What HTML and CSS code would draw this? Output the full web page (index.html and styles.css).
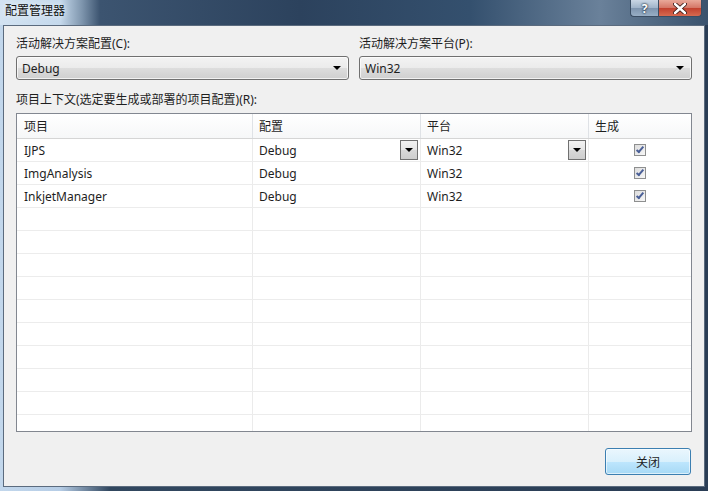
FILE: index.html
```html
<!DOCTYPE html>
<html lang="zh-CN">
<head>
    <meta charset="UTF-8">
    <title>配置管理器</title>
    <link rel="stylesheet" href="styles.css">
</head>
<body>
    <div class="window">
        <div class="titlebar">
            <span class="title">配置管理器</span>
            <div class="caption-buttons">
                <div class="cap-btn help">?</div>
                <div class="cap-btn close">
                    <svg width="14" height="11" viewBox="0 0 14 11">
                        <path d="M2 1 L12 10 M12 1 L2 10" stroke="#3a1a16" stroke-width="4.2" stroke-linecap="round"/>
                        <path d="M2 1 L12 10 M12 1 L2 10" stroke="#ffffff" stroke-width="2.4" stroke-linecap="round"/>
                    </svg>
                </div>
            </div>
        </div>

        <div class="client">
            <div class="top-row">
                <div class="field">
                    <div class="label">活动解决方案配置(C):</div>
                    <div class="combo">
                        <span>Debug</span>
                        <span class="arrow"></span>
                    </div>
                </div>
                <div class="field">
                    <div class="label">活动解决方案平台(P):</div>
                    <div class="combo">
                        <span>Win32</span>
                        <span class="arrow"></span>
                    </div>
                </div>
            </div>

            <div class="label grid-label">项目上下文(选定要生成或部署的项目配置)(R):</div>

            <div class="grid">
                <div class="row head">
                    <div class="cell first">项目</div>
                    <div class="cell">配置</div>
                    <div class="cell">平台</div>
                    <div class="cell last">生成</div>
                </div>
                <div class="row">
                    <div class="cell first">IJPS</div>
                    <div class="cell"><span class="grow">Debug</span><span class="drop"><span class="arrow"></span></span></div>
                    <div class="cell"><span class="grow">Win32</span><span class="drop"><span class="arrow"></span></span></div>
                    <div class="cell last check-cell"><span class="check"></span></div>
                </div>
                <div class="row">
                    <div class="cell first">ImgAnalysis</div>
                    <div class="cell">Debug</div>
                    <div class="cell">Win32</div>
                    <div class="cell last check-cell"><span class="check"></span></div>
                </div>
                <div class="row">
                    <div class="cell first">InkjetManager</div>
                    <div class="cell">Debug</div>
                    <div class="cell">Win32</div>
                    <div class="cell last check-cell"><span class="check"></span></div>
                </div>
                <div class="row"><div class="cell first"></div><div class="cell"></div><div class="cell"></div><div class="cell last"></div></div>
                <div class="row"><div class="cell first"></div><div class="cell"></div><div class="cell"></div><div class="cell last"></div></div>
                <div class="row"><div class="cell first"></div><div class="cell"></div><div class="cell"></div><div class="cell last"></div></div>
                <div class="row"><div class="cell first"></div><div class="cell"></div><div class="cell"></div><div class="cell last"></div></div>
                <div class="row"><div class="cell first"></div><div class="cell"></div><div class="cell"></div><div class="cell last"></div></div>
                <div class="row"><div class="cell first"></div><div class="cell"></div><div class="cell"></div><div class="cell last"></div></div>
                <div class="row"><div class="cell first"></div><div class="cell"></div><div class="cell"></div><div class="cell last"></div></div>
                <div class="row"><div class="cell first"></div><div class="cell"></div><div class="cell"></div><div class="cell last"></div></div>
                <div class="row"><div class="cell first"></div><div class="cell"></div><div class="cell"></div><div class="cell last"></div></div>
                <div class="row"><div class="cell first"></div><div class="cell"></div><div class="cell"></div><div class="cell last"></div></div>
            </div>

            <div class="footer">
                <button class="btn">关闭</button>
            </div>
        </div>
    </div>
</body>
</html>
```

FILE: styles.css
```css
body {
    margin: 0;
    font-family: "Noto Sans", "Noto Sans CJK SC", sans-serif;
    font-size: 12px;
    color: #1e1e1e;
}

.window {
    width: 708px;
    height: 491px;
    overflow: hidden;
    background: linear-gradient(to right, #c2d7ec 0, #b6cde6 60px, #31475f 110px, #2a3d55 100%);
}

.titlebar {
    height: 25px;
    display: flex;
    align-items: flex-start;
    background: linear-gradient(to right, #d3e3f2 0, #c5d9ec 60px, #7e95ad 82px, #3c5470 100px, #2c425d 300px, #34506e 470px, #6a819a 600px, #4e6680 660px, #3a526d 708px);
}

.title {
    padding: 3px 0 0 5px;
    line-height: 16px;
    color: #111;
    text-shadow: 0 0 6px rgba(255, 255, 255, 0.9);
}

.caption-buttons {
    margin-left: auto;
    margin-right: 6px;
    display: flex;
}

.cap-btn {
    height: 17px;
    box-sizing: border-box;
    border: 1px solid #3a4d63;
    border-top: none;
    display: flex;
    align-items: center;
    justify-content: center;
}

.help {
    width: 28px;
    border-radius: 0 0 0 4px;
    border-right: none;
    background: linear-gradient(#c9d6e4, #9fb3c9 50%, #7d94ae 51%, #98aec5);
    color: #fff;
    font-weight: bold;
    font-size: 12px;
    text-shadow: 0 0 2px #1d2c3d, 0 0 2px #1d2c3d;
}

.close {
    width: 44px;
    border-radius: 0 0 4px 0;
    background: linear-gradient(#e9a99a, #d47565 50%, #c2402e 51%, #d66a50);
}

.client {
    margin: 0 3px 4px 3px;
    height: 462px;
    box-sizing: border-box;
    border: 1px solid #5b6b7e;
    background: #f0f0f0;
    padding: 10px 12px 11px 12px;
}

.label {
    line-height: 16px;
    white-space: nowrap;
}

.top-row {
    display: grid;
    grid-template-columns: 1fr 1fr;
    gap: 10px;
}

.combo {
    margin-top: 4px;
    height: 24px;
    box-sizing: border-box;
    border: 1px solid #707070;
    border-radius: 3px;
    background: linear-gradient(#f3f3f3, #ebebeb 50%, #dddddd 51%, #cfcfcf);
    box-shadow: inset 0 0 0 1px rgba(255, 255, 255, 0.7);
    display: flex;
    align-items: center;
    padding: 0 7px 0 5px;
}

.combo span:first-child {
    flex: 1;
}

.arrow {
    width: 0;
    height: 0;
    border-left: 4px solid transparent;
    border-right: 4px solid transparent;
    border-top: 4px solid #000;
}

.grid-label {
    margin-top: 12px;
}

.grid {
    margin-top: 5px;
    height: 319px;
    box-sizing: border-box;
    border: 1px solid #828790;
    background: #fff;
    overflow: hidden;
}

.row {
    display: grid;
    grid-template-columns: 236px 168px 168px 1fr;
    height: 23px;
    box-sizing: border-box;
    border-bottom: 1px solid #ececec;
}

.cell {
    display: flex;
    align-items: center;
    padding-left: 6px;
    border-right: 1px solid #ebebeb;
    white-space: nowrap;
}

.cell.first {
    padding-left: 7px;
}

.cell.last {
    border-right: none;
}

.head {
    height: 25px;
    background: linear-gradient(#ffffff, #f6f7f8);
    border-bottom: 1px solid #d5d5d5;
}

.head .cell {
    border-right: 1px solid #dfe2e6;
}

.head .cell.last {
    border-right: none;
}

.grow {
    flex: 1;
}

.drop {
    width: 18px;
    height: 20px;
    margin-right: 2px;
    box-sizing: border-box;
    border: 1px solid #707070;
    background: linear-gradient(#f2f2f2, #e6e6e6 50%, #d8d8d8 51%, #cdcdcd);
    display: flex;
    align-items: center;
    justify-content: center;
}

.check-cell {
    justify-content: center;
    padding-left: 0;
}

.check {
    width: 12px;
    height: 12px;
    box-sizing: border-box;
    border: 1px solid #8e8f8f;
    background: linear-gradient(135deg, #dcdcdc, #f7f7f7);
    position: relative;
}

.check::after {
    content: "";
    position: absolute;
    left: 3px;
    top: 0;
    width: 2px;
    height: 6px;
    border: solid #4a5f97;
    border-width: 0 2px 2px 0;
    transform: rotate(40deg);
}

.footer {
    display: flex;
    justify-content: flex-end;
    margin-top: 16px;
    padding-right: 1px;
}

.btn {
    width: 86px;
    height: 27px;
    border: 1px solid #3c7fb1;
    border-radius: 3px;
    background: linear-gradient(#eaf6fd, #d9f0fc 50%, #bee6fd 51%, #a7d9f5);
    box-shadow: inset 0 0 0 1px rgba(255, 255, 255, 0.6);
    font-family: "Noto Sans", "Noto Sans CJK SC", sans-serif;
    font-size: 12px;
    color: #1e1e1e;
    padding: 0;
}
```
